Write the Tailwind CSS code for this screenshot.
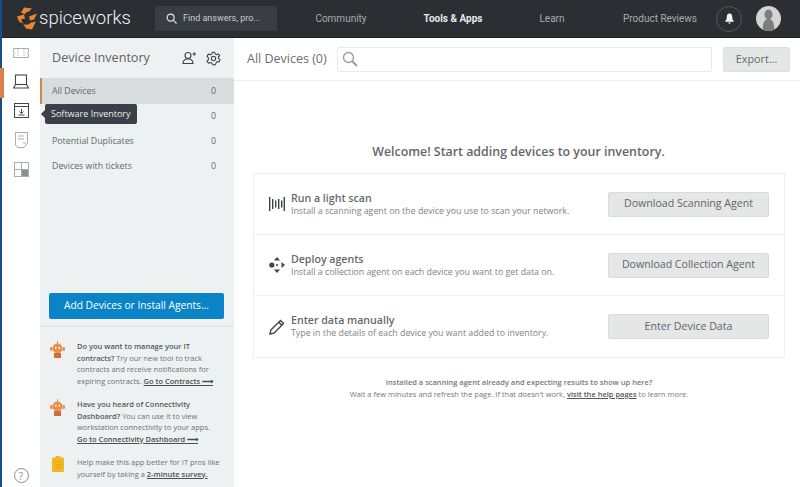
<!DOCTYPE html>
<html lang="en">

<head>
  <meta charset="UTF-8" />
  <title>Device Inventory</title>
  <script src="https://cdn.jsdelivr.net/npm/@tailwindcss/browser@4"></script>
</head>

<body class="w-[800px] h-[487px] overflow-hidden bg-white font-['Open_Sans',sans-serif] text-[#5f6366]">
  <div class="flex flex-col h-[487px] border-l-2 border-[#1a4f86]">

    <!-- top bar -->
    <header class="flex items-center h-[38px] shrink-0 bg-[#2b2e33] border-b border-[#1d1f22] font-['Roboto',sans-serif]">
      <svg class="ml-[15px] w-[20px] h-[23px]" viewBox="0 0 20 22" fill="#e8862e">
        <path d="M7 0 L15 1 L12 4 Q9 4 8 7 L4 5 Z" />
        <path d="M0 9 L7 7 L8 11 L4 12 L6 16 L2 14 Z" />
        <path d="M12 9 L20 6 L17 12 L13 13 Z" />
        <path d="M6 16 Q10 19 14 15 L19 14 L15 22 L9 21 Z" />
      </svg>
      <span class="ml-[2px] w-[116px] text-[18.5px] leading-none text-[#f1f2f2] font-light">spiceworks</span>
      <div class="flex items-center w-[122px] h-[25px] bg-[#3a3e44] rounded-[2px] pl-[11px]">
        <svg class="w-[11px] h-[11px]" viewBox="0 0 12 12" fill="none" stroke="#e6e6e6" stroke-width="1.3">
          <circle cx="5" cy="5" r="3.8" />
          <path d="M8 8 L11.5 11.5" />
        </svg>
        <span class="ml-[6px] text-[9px] text-[#c9cbcd]">Find answers, pro...</span>
      </div>
      <nav class="flex items-center text-[10px] text-[#a9acae]">
        <span class="w-[128px] text-center">Community</span>
        <span class="w-[96px] text-center font-bold text-[#e8e9ea]">Tools &amp; Apps</span>
        <span class="w-[102px] text-center">Learn</span>
        <span class="w-[114px] text-center">Product Reviews</span>
      </nav>
      <div class="flex items-center justify-center -ml-[1px] w-[26px] h-[26px] rounded-full border border-[#55585c]">
        <svg class="w-[11px] h-[11px]" viewBox="0 0 12 12" fill="#f4f4f4">
          <path d="M6 0.5 C3.5 0.5 3 2.5 3 4.5 C3 7 2 8 1 9.5 L11 9.5 C10 8 9 7 9 4.5 C9 2.5 8.5 0.5 6 0.5 Z" />
          <path d="M4.5 10.3 H7.5 Q7 11.8 6 11.8 Q5 11.8 4.5 10.3 Z" />
        </svg>
      </div>
      <div class="ml-[14px] w-[25px] h-[25px] rounded-full bg-[#d4d4d4] overflow-hidden">
        <svg class="w-[25px] h-[25px]" viewBox="0 0 25 25" fill="#7d7d7d">
          <ellipse cx="12.5" cy="8.5" rx="4" ry="5" />
          <path d="M7 25 Q6 15 11 13 H14 Q19 15 18 25 Z" />
        </svg>
      </div>
    </header>

    <div class="flex flex-1 min-h-0">

      <!-- icon rail -->
      <aside class="relative flex flex-col items-center w-[38px] shrink-0 bg-white">
        <svg class="mt-[10px] w-[16px] h-[10px]" viewBox="0 0 16 10" fill="none" stroke="#a9adb0" stroke-width="1">
          <path d="M0.5 0.5 H15.5 V3 Q14 5 15.5 7 V9.5 H0.5 V7 Q2 5 0.5 3 Z" />
          <path d="M5 1 V9 M11 1 V9" stroke-dasharray="1 1" />
        </svg>
        <span class="absolute -left-[2px] top-[30px] w-[4px] h-[30px] bg-[#d9814b]"></span>
        <svg class="mt-[16px] w-[16px] h-[15px]" viewBox="0 0 16 15" fill="none" stroke="#43474b" stroke-width="1.1">
          <rect x="2.5" y="1" width="11" height="9.5" />
          <path d="M0.5 14 L2.5 10.5 H13.5 L15.5 14 Z" />
        </svg>
        <svg class="mt-[14px] w-[15px] h-[15px]" viewBox="0 0 15 15" fill="none" stroke="#43474b" stroke-width="1">
          <rect x="0.5" y="0.5" width="14" height="14" />
          <path d="M0.5 3.5 H14.5" />
          <path d="M7.5 6 V10 M5.5 8.5 L7.5 10.5 L9.5 8.5 M4.5 12 H10.5" />
        </svg>
        <svg class="mt-[14px] w-[13px] h-[16px]" viewBox="0 0 13 16" fill="none" stroke="#a9adb0" stroke-width="1">
          <path d="M0.5 0.5 H12.5 V11 L9 15.5 H2.5 L0.5 13 Z" />
          <path d="M3 4 H9 M3 7 H9 M8 11 H11" />
        </svg>
        <svg class="mt-[14px] w-[15px] h-[15px]" viewBox="0 0 15 15" fill="none" stroke="#a9adb0" stroke-width="1">
          <rect x="0.5" y="0.5" width="14" height="14" />
          <path d="M0.5 7.5 H14.5 M7.5 0.5 V14.5" />
          <rect x="8" y="8" width="6" height="6" fill="#8c9094" stroke="none" />
        </svg>
        <span class="mt-auto mb-[4px] flex items-center justify-center w-[15px] h-[15px] rounded-full border border-[#8a8d90] text-[10px] leading-none text-[#8a8d90]">?</span>
      </aside>

      <!-- inventory panel -->
      <section class="relative flex flex-col w-[194px] shrink-0 bg-[#eef1f2]">
        <div class="flex items-center h-[40px] pl-[12px] pr-[13px] shrink-0">
          <h2 class="text-[12.6px] text-[#5f6366]">Device Inventory</h2>
          <svg class="ml-auto w-[15px] h-[14px]" viewBox="0 0 15 14" fill="none" stroke="#3f4347" stroke-width="1.1">
            <circle cx="6" cy="4.5" r="3" />
            <path d="M1 12.5 Q1 9 4.5 8 H7.5 Q11 9 11 12.5 Z" />
            <path d="M10.5 3 H14 M12.2 1.2 V4.8" />
          </svg>
          <svg class="ml-[9px] w-[15px] h-[15px]" viewBox="0 0 24 24" fill="none" stroke="#3f4347" stroke-width="1.7">
            <circle cx="12" cy="12" r="3.5" />
            <path d="M10 2 H14 L14.6 5 L17.2 6.1 L19.8 4.4 L22 7.6 L19.6 9.6 L20 12 L22.6 13.8 L21 17.4 L18 16.8 L16 19 L15.4 22 H10.6 L9.4 19.4 L6.6 18.4 L3.8 19.6 L1.6 16 L4 14 L3.8 11 L1.6 8.6 L3.8 5 L6.6 6 L9.2 4.8 Z" stroke-linejoin="round" />
          </svg>
        </div>
        <ul class="text-[8.8px] text-[#63676a]">
          <li class="flex items-center justify-between h-[26px] pt-[1px] pl-[10px] pr-[18px] bg-[#d9dcdd] border-l-2 border-[#d9814b]"><span>All Devices</span><span>0</span></li>
          <li class="flex items-center justify-between h-[25px] pt-[1px] pl-[12px] pr-[18px]"><span>Software Inventory</span><span>0</span></li>
          <li class="flex items-center justify-between h-[25px] pt-[1px] pl-[12px] pr-[18px]"><span>Potential Duplicates</span><span>0</span></li>
          <li class="flex items-center justify-between h-[25px] pt-[1px] pl-[12px] pr-[18px]"><span>Devices with tickets</span><span>0</span></li>
        </ul>

        <!-- tooltip -->
        <div class="absolute left-[5px] top-[66px] flex items-center h-[20px] px-[6px] rounded-[2px] bg-[#3b3f4a] text-[9px] text-[#eceded]">
          <span class="absolute -left-[4px] top-[6px] w-0 h-0 border-y-[4px] border-y-transparent border-r-[4px] border-r-[#3b3f4a]"></span>
          Software Inventory
        </div>

        <div class="mt-auto pl-[9px] pr-[10px] pb-[7px] border-b border-[#dfe2e3]">
          <button class="w-full h-[26px] rounded-[2px] bg-[#0a84c6] text-[10.2px] text-white">Add Devices or Install Agents...</button>
        </div>

        <div class="h-[160px] shrink-0 pl-[37px] pr-[6px] pt-[14px] text-[7.5px] leading-[11.5px] text-[#6d7073]">
          <div class="relative h-[58px]">
            <svg class="absolute -left-[27px] top-[0px] w-[15px] h-[18px]" viewBox="0 0 15 18" fill="#e8914f">
              <rect x="7" y="0" width="1" height="3" />
              <circle cx="7.5" cy="7.5" r="5" />
              <rect x="0" y="6" width="2.5" height="4" rx="1" />
              <rect x="12.5" y="6" width="2.5" height="4" rx="1" />
              <rect x="4" y="12" width="7" height="5" fill="#d06f35" />
              <rect x="5" y="6" width="1.5" height="1.5" fill="#fff" />
              <rect x="8.5" y="6" width="1.5" height="1.5" fill="#fff" />
            </svg>
            <p><b class="font-semibold text-[#55585b]">Do you want to manage your IT contracts?</b> Try our new tool to track contracts and receive notifications for expiring contracts. <a class="font-semibold underline text-[#4b4e51]">Go to Contracts ⟶</a></p>
          </div>
          <div class="relative h-[58px]">
            <svg class="absolute -left-[27px] top-[0px] w-[15px] h-[18px]" viewBox="0 0 15 18" fill="#e8914f">
              <rect x="7" y="0" width="1" height="3" />
              <circle cx="7.5" cy="7.5" r="5" />
              <rect x="0" y="6" width="2.5" height="4" rx="1" />
              <rect x="12.5" y="6" width="2.5" height="4" rx="1" />
              <rect x="4" y="12" width="7" height="5" fill="#d06f35" />
              <rect x="5" y="6" width="1.5" height="1.5" fill="#fff" />
              <rect x="8.5" y="6" width="1.5" height="1.5" fill="#fff" />
            </svg>
            <p><b class="font-semibold text-[#55585b]">Have you heard of Connectivity Dashboard?</b> You can use it to view workstation connectivity to your apps. <a class="block font-semibold underline text-[#4b4e51]">Go to Connectivity Dashboard ⟶</a></p>
          </div>
          <div class="relative">
            <svg class="absolute -left-[25px] top-[-1px] w-[12px] h-[16px]" viewBox="0 0 12 16" fill="#f2b824">
              <rect x="3.5" y="0" width="5" height="3" />
              <rect x="0" y="1.5" width="12" height="14.5" rx="1" />
              <path d="M3 6 H9 M3 9 H9 M3 12 H9" stroke="#d99c14" stroke-width="0.8" />
            </svg>
            <p>Help make this app better for IT pros like yourself by taking a <a class="font-semibold underline text-[#4b4e51]">2-minute survey.</a></p>
          </div>
        </div>
      </section>

      <!-- main area -->
      <main class="flex-1 min-w-0 bg-white">
        <div class="flex items-center h-[43px] pl-[13px] pr-[10px] border-b border-[#eeeeee]">
          <span class="w-[90px] text-[12.5px] text-[#6a6d70]">All Devices (0)</span>
          <div class="flex items-center w-[375px] h-[25px] pl-[4px] border border-[#e8e9ea] rounded-[2px]">
            <svg class="w-[16px] h-[16px]" viewBox="0 0 16 16" fill="none" stroke="#9a9d9f" stroke-width="1.3">
              <circle cx="6.5" cy="6.5" r="5" />
              <path d="M10.2 10.2 L15 15" stroke-width="2" />
            </svg>
          </div>
          <button class="ml-auto w-[67px] h-[25px] rounded-[2px] bg-[#e5e6e6] border border-[#dedfdf] text-[10.8px] text-[#66696c]">Export...</button>
        </div>

        <h1 class="mt-[62px] pl-[3px] text-center text-[12.4px] leading-[18px] font-semibold text-[#64676a]">Welcome! Start adding devices to your inventory.</h1>

        <div class="mt-[12px] ml-[19px] w-[532px] border border-[#f0f0f0] divide-y divide-[#f0f0f0]">
          <div class="flex items-center h-[61px] pl-[15px] pr-[15px]">
            <svg class="w-[16px] h-[16px] shrink-0" viewBox="0 0 16 16" fill="#3f4347">
              <rect x="0" y="1" width="1.4" height="14" />
              <rect x="3" y="3" width="1.4" height="10" />
              <rect x="6" y="4.5" width="1.4" height="7" />
              <rect x="9" y="3" width="1.4" height="10" />
              <rect x="12" y="4.5" width="1.4" height="7" />
              <rect x="14.6" y="1" width="1.4" height="14" />
            </svg>
            <div class="ml-[6px] flex-1">
              <h3 class="text-[10.6px] leading-[14px] font-semibold text-[#66696c]">Run a light scan</h3>
              <p class="text-[8.8px] leading-[13px] text-[#808386]">Install a scanning agent on the device you use to scan your network.</p>
            </div>
            <button class="w-[161px] h-[25px] rounded-[2px] bg-[#e5e6e6] border border-[#d9dada] text-[10.6px] text-[#626568]">Download Scanning Agent</button>
          </div>
          <div class="flex items-center h-[61px] pl-[15px] pr-[15px]">
            <svg class="w-[16px] h-[16px] shrink-0" viewBox="0 0 16 16" fill="#3f4347">
              <path d="M8 0 L11 3.5 H5 Z M8 16 L5 12.5 H11 Z M16 8 L12.5 11 V5 Z" />
              <circle cx="2.8" cy="8" r="2.6" />
              <circle cx="8" cy="8" r="1" />
            </svg>
            <div class="ml-[6px] flex-1">
              <h3 class="text-[10.6px] leading-[14px] font-semibold text-[#66696c]">Deploy agents</h3>
              <p class="text-[8.8px] leading-[13px] text-[#808386]">Install a collection agent on each device you want to get data on.</p>
            </div>
            <button class="w-[161px] h-[25px] rounded-[2px] bg-[#e5e6e6] border border-[#d9dada] text-[10.6px] text-[#626568]">Download Collection Agent</button>
          </div>
          <div class="flex items-center h-[61px] pl-[15px] pr-[15px]">
            <svg class="w-[16px] h-[16px] shrink-0" viewBox="0 0 16 16" fill="none" stroke="#3f4347" stroke-width="1.4">
              <path d="M1 15 L1.8 11 L11.5 1.5 L14.5 4.5 L5 14.2 Z" />
              <path d="M9.8 3.2 L12.8 6.2" />
            </svg>
            <div class="ml-[6px] flex-1">
              <h3 class="text-[10.6px] leading-[14px] font-semibold text-[#66696c]">Enter data manually</h3>
              <p class="text-[8.8px] leading-[13px] text-[#808386]">Type in the details of each device you want added to inventory.</p>
            </div>
            <button class="w-[161px] h-[25px] rounded-[2px] bg-[#e5e6e6] border border-[#d9dada] text-[10.6px] text-[#626568]">Enter Device Data</button>
          </div>
        </div>

        <div class="mt-[18px] ml-[19px] w-[532px] text-center text-[7.5px] leading-[12px] text-[#75787b]">
          <p class="font-semibold">Installed a scanning agent already and expecting results to show up here?</p>
          <p>Wait a few minutes and refresh the page. If that doesn't work, <a class="font-semibold underline text-[#55585b]">visit the help pages</a> to learn more.</p>
        </div>
      </main>
    </div>
  </div>
</body>

</html>
